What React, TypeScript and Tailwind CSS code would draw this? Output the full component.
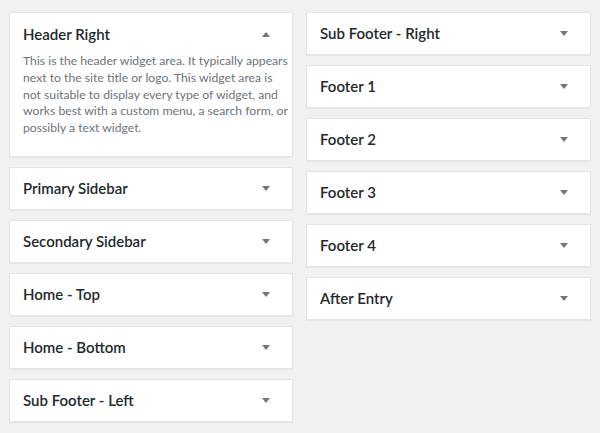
import React from "react";

const Arrow = ({ up = false }: { up?: boolean }) => (
  <svg width="8" height="5" viewBox="0 0 8 5" className="shrink-0">
    {up ? <polygon points="0,5 8,5 4,0" fill="#72777c" /> : <polygon points="0,0 8,0 4,5" fill="#72777c" />}
  </svg>
);

const Title = ({ children }: { children: React.ReactNode }) => (
  <span className="text-[15px] font-semibold text-[#23282d] leading-none">{children}</span>
);

const Card = ({ title }: { title: string }) => (
  <div className="h-[43px] bg-white border border-[#e5e5e5] shadow-[0_1px_1px_rgba(0,0,0,0.04)] flex items-center justify-between pl-[13px] pr-[22px]">
    <Title>{title}</Title>
    <Arrow />
  </div>
);

const lines = [
  "This is the header widget area. It typically appears",
  "next to the site title or logo. This widget area is",
  "not suitable to display every type of widget, and",
  "works best with a custom menu, a search form, or",
  "possibly a text widget.",
];

export default function App() {
  const left = ["Primary Sidebar", "Secondary Sidebar", "Home - Top", "Home - Bottom", "Sub Footer - Left"];
  const right = ["Sub Footer - Right", "Footer 1", "Footer 2", "Footer 3", "Footer 4", "After Entry"];
  return (
    <div
      className="w-[600px] h-[433px] bg-[#f1f1f1] flex gap-[13px] pl-[9px] pt-[12px] overflow-hidden"
      style={{ fontFamily: 'Lato, "Open Sans", sans-serif' }}
    >
      <div className="w-[284px] flex flex-col gap-[10px]">
        <div className="h-[145px] bg-white border border-[#e5e5e5] shadow-[0_1px_1px_rgba(0,0,0,0.04)] pl-[13px] pr-[4px]">
          <div className="h-[43px] flex items-center justify-between pr-[18px]">
            <Title>Header Right</Title>
            <Arrow up />
          </div>
          <p className="text-[12.2px] leading-[16.8px] text-[#6e7378] -mt-[3px]">
            {lines.map((l) => (
              <span key={l} className="block whitespace-nowrap">
                {l}
              </span>
            ))}
          </p>
        </div>
        {left.map((t) => (
          <Card key={t} title={t} />
        ))}
      </div>
      <div className="w-[285px] flex flex-col gap-[10px]">
        {right.map((t) => (
          <Card key={t} title={t} />
        ))}
      </div>
    </div>
  );
}
